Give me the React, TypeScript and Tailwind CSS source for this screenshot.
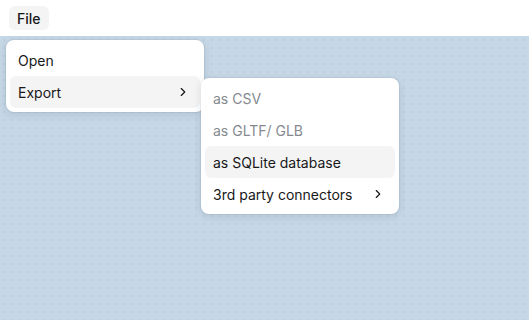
import { ChevronRight } from 'lucide-react';

type Item = { label: string; disabled?: boolean; active?: boolean; sub?: boolean };

const fileItems: Item[] = [
  { label: 'Open' },
  { label: 'Export', active: true, sub: true },
];

const exportItems: Item[] = [
  { label: 'as CSV', disabled: true },
  { label: 'as GLTF/ GLB', disabled: true },
  { label: 'as SQLite database', active: true },
  { label: '3rd party connectors', sub: true },
];

function Menu({ items, className }: { items: Item[]; className: string }) {
  return (
    <div
      className={`absolute w-[198px] p-1 bg-white rounded-lg shadow-[0_2px_8px_rgba(15,30,50,0.12),0_0_0_1px_rgba(15,30,50,0.05)] ${className}`}
    >
      {items.map((item) => (
        <div
          key={item.label}
          className={`h-8 flex items-center justify-between pl-2 pr-[10px] rounded-md text-[14px] ${
            item.active ? 'bg-[#f4f4f5]' : ''
          } ${item.disabled ? 'text-[#868a90]' : 'text-[#18181a]'}`}
        >
          <span>{item.label}</span>
          {item.sub && <ChevronRight className="w-[14px] h-[14px] text-[#18181a]" strokeWidth={2} />}
        </div>
      ))}
    </div>
  );
}

export default function App() {
  return (
    <div className="h-[320px] w-full flex flex-col font-['Inter',sans-serif]">
      {/* Menubar */}
      <div className="h-9 bg-white flex items-center px-[9px]">
        <button className="h-6 px-2 rounded-md bg-[#f4f4f5] text-[14px] font-medium text-[#18181a]">
          File
        </button>
      </div>

      {/* Canvas */}
      <div className="flex-1 relative bg-[#c6d7e6] bg-[radial-gradient(#bccfe0_1px,transparent_1px)] bg-[size:8px_8px]">
        <Menu items={fileItems} className="left-[6px] top-1" />
        <Menu items={exportItems} className="left-[201px] top-[42px]" />
      </div>
    </div>
  );
}
